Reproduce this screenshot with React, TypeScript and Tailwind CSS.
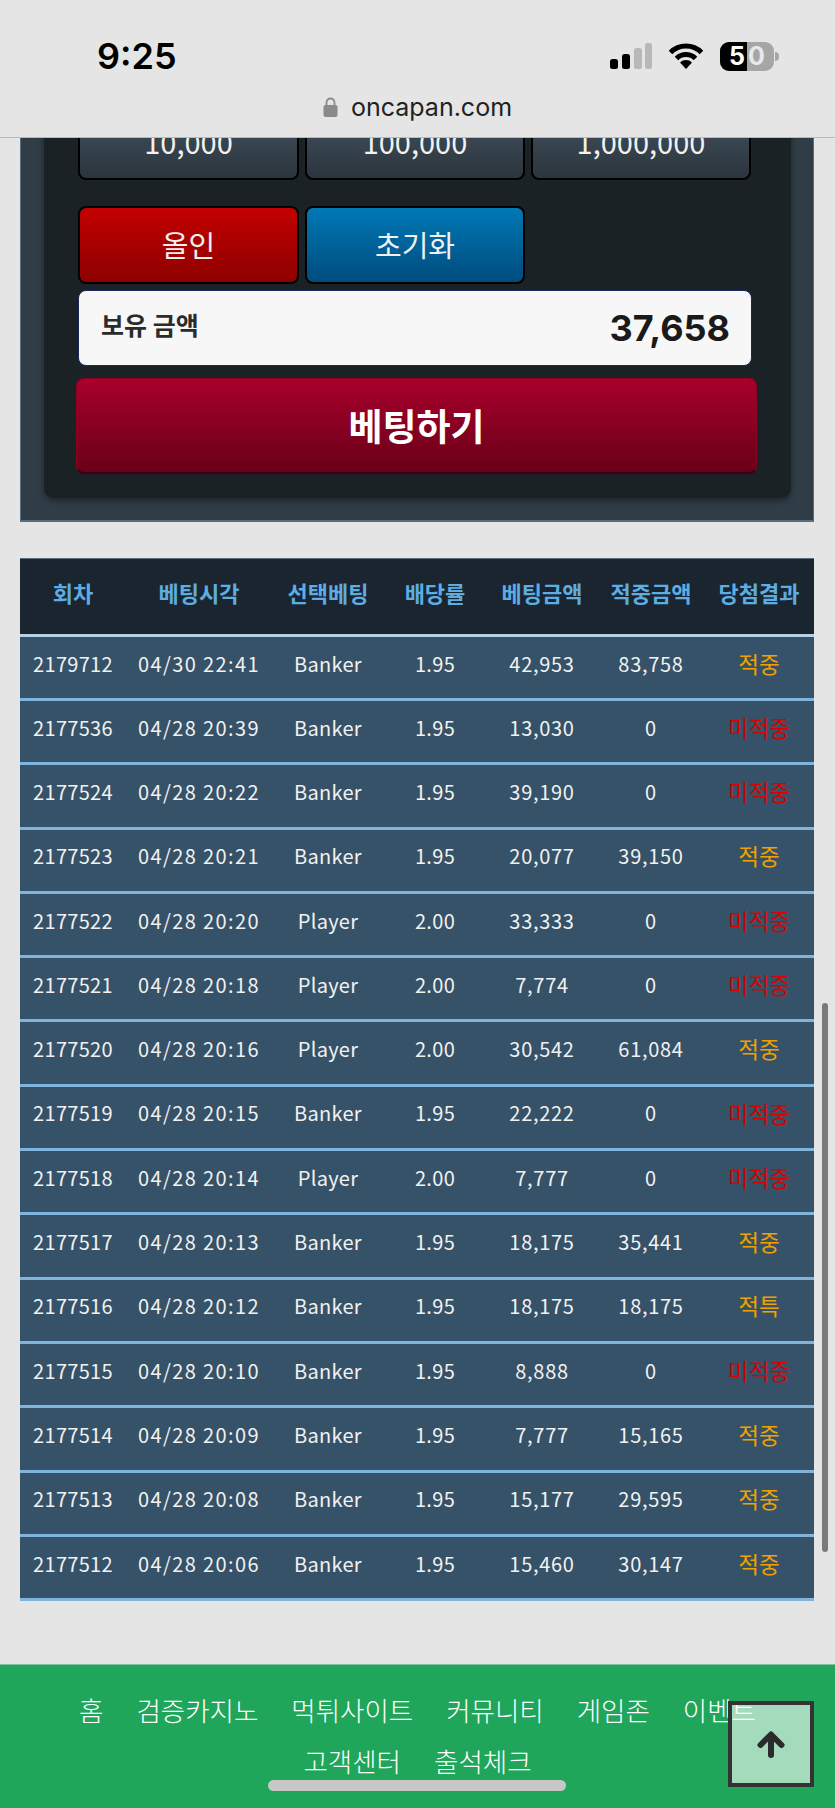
const KR = "font-['Nanum_Gothic','Noto_Sans_CJK_KR','Noto_Sans',sans-serif]";

const rows: [string, string, string, string, string, string, string][] = [
  ["2179712", "04/30 22:41", "Banker", "1.95", "42,953", "83,758", "적중"],
  ["2177536", "04/28 20:39", "Banker", "1.95", "13,030", "0", "미적중"],
  ["2177524", "04/28 20:22", "Banker", "1.95", "39,190", "0", "미적중"],
  ["2177523", "04/28 20:21", "Banker", "1.95", "20,077", "39,150", "적중"],
  ["2177522", "04/28 20:20", "Player", "2.00", "33,333", "0", "미적중"],
  ["2177521", "04/28 20:18", "Player", "2.00", "7,774", "0", "미적중"],
  ["2177520", "04/28 20:16", "Player", "2.00", "30,542", "61,084", "적중"],
  ["2177519", "04/28 20:15", "Banker", "1.95", "22,222", "0", "미적중"],
  ["2177518", "04/28 20:14", "Player", "2.00", "7,777", "0", "미적중"],
  ["2177517", "04/28 20:13", "Banker", "1.95", "18,175", "35,441", "적중"],
  ["2177516", "04/28 20:12", "Banker", "1.95", "18,175", "18,175", "적특"],
  ["2177515", "04/28 20:10", "Banker", "1.95", "8,888", "0", "미적중"],
  ["2177514", "04/28 20:09", "Banker", "1.95", "7,777", "15,165", "적중"],
  ["2177513", "04/28 20:08", "Banker", "1.95", "15,177", "29,595", "적중"],
  ["2177512", "04/28 20:06", "Banker", "1.95", "15,460", "30,147", "적중"],
];

const heads = ["회차", "베팅시각", "선택베팅", "배당률", "베팅금액", "적중금액", "당첨결과"];
const cols = "grid grid-cols-[106px_146px_112px_102px_112px_106px_110px] items-center text-center";

function StatusIcons() {
  return (
    <div className="flex items-center gap-[16px]">
      <svg width="42" height="26" viewBox="0 0 42 26">
        <rect x="0" y="16" width="8" height="10" rx="2.5" fill="#000" />
        <rect x="12" y="11" width="8" height="15" rx="2.5" fill="#000" />
        <rect x="24" y="5" width="8" height="21" rx="2.5" fill="#b8b8b8" />
        <rect x="35" y="0" width="7" height="26" rx="2.5" fill="#b8b8b8" />
      </svg>
      <svg width="36" height="26" viewBox="0 0 36 26">
        <path d="M18 26 L12 19.500 A8.500 8.500 0 0 1 24 19.500 Z" fill="#000" />
        <path d="M2.500 9.500 A22 22 0 0 1 33.500 9.500" fill="none" stroke="#000" strokeWidth="5" />
        <path d="M8.500 15.500 A13.500 13.500 0 0 1 27.500 15.500" fill="none" stroke="#000" strokeWidth="5" />
      </svg>
      <div className="flex items-center gap-[1px]">
        <div className="relative flex h-[29px] w-[54px] items-center justify-center gap-[3px] overflow-hidden rounded-[9px] bg-[#a6a6a6] font-['Inter',sans-serif] text-[25px] font-bold leading-none text-white">
          <div className="absolute inset-y-0 left-0 w-[27px] bg-black" />
          <span className="relative">5</span>
          <span className="relative text-[#e8e8e8]">0</span>
        </div>
        <div className="h-[9px] w-[4px] rounded-r-full bg-[#a6a6a6]" />
      </div>
    </div>
  );
}

function Chip({ children, className }: { children: React.ReactNode; className: string }) {
  return (
    <div className={`flex items-center justify-center rounded-[8px] border-2 border-black text-[29px] text-[#f1f1f1] ${className}`}>
      {children}
    </div>
  );
}

export default function App() {
  return (
    <div className={`relative h-[1808px] w-[835px] overflow-hidden bg-[#e5e5e5] ${KR}`}>
      {/* browser chrome */}
      <header className="relative z-10 h-[138px] border-b border-[#b9b9b9] bg-[#e5e5e5]">
        <div className="flex items-center justify-between pl-[97px] pr-[56px] pt-[36px]">
          <span className="font-['Inter',sans-serif] text-[36px] font-semibold leading-[40px] text-black">9:25</span>
          <StatusIcons />
        </div>
        <div className="mt-[16px] flex items-center justify-center gap-[13px]">
          <svg width="15" height="20" viewBox="0 0 15 20">
            <path d="M3.500 9V5.500a4 4 0 0 1 8 0V9" fill="none" stroke="#8a8a8a" strokeWidth="1.800" />
            <rect x="0.500" y="8" width="14" height="12" rx="2" fill="#8a8a8a" />
          </svg>
          <span className="font-['Inter',sans-serif] text-[25px] leading-[30px] text-[#222]">oncapan.com</span>
        </div>
      </header>

      {/* betting panel */}
      <section className="ml-[20px] mt-[-35px] w-[794px] border-x border-b-2 border-[#5b6d7b] bg-[#303d47] pb-[22px] pl-[23px] pr-[22px]">
        <div className="rounded-b-[10px] bg-[#1b2226] pb-[24px] pl-[34px] pr-[39px] shadow-[0_3px_6px_rgba(0,0,0,0.4)]">
          <div className="grid h-[77px] grid-cols-[221px_220px_220px] gap-x-[6px]">
            <Chip className="bg-gradient-to-b from-[#455460] to-[#2b353e]">10,000</Chip>
            <Chip className="bg-gradient-to-b from-[#455460] to-[#2b353e]">100,000</Chip>
            <Chip className="bg-gradient-to-b from-[#455460] to-[#2b353e]">1,000,000</Chip>
          </div>
          <div className="mt-[26px] grid h-[78px] grid-cols-[221px_220px_220px] gap-x-[6px]">
            <Chip className="bg-gradient-to-b from-[#c40000] to-[#8e0000]">올인</Chip>
            <Chip className="bg-gradient-to-b from-[#0079b5] to-[#004c7e]">초기화</Chip>
          </div>
          <div className="mt-[6px] flex h-[76px] w-[674px] justify-between rounded-[8px] border border-[#17275a] bg-[#f7f7f8] pl-[22px] pr-[21px]">
            <span className="mt-[17px] text-[25px] font-semibold leading-[32px] text-[#2b2b2b]">보유 금액</span>
            <span className="mt-[15px] font-['Inter',sans-serif] text-[36px] font-bold leading-[44px] text-[#1a1a1a]">37,658</span>
          </div>
          <button className="ml-[-2px] mt-[12px] flex h-[96px] w-[681px] items-center justify-center rounded-[8px] border border-b-2 border-[#8c0020] border-b-[#3b0010] bg-gradient-to-b from-[#a9002c] to-[#690018] text-[37px] font-bold text-white">
            베팅하기
          </button>
        </div>
      </section>

      {/* table */}
      <section className="mx-[20px] mt-[36px] w-[794px]">
        <div className={`${cols} h-[76px] border-t border-[#5b6d7b] bg-[#1a2530] text-[22px] font-bold text-[#5dade2]`}>
          {heads.map((h) => (
            <div key={h} className="mt-[-8px]">{h}</div>
          ))}
        </div>
        <div className="border-t-[3px] border-[#b5d2e5]" />
        {rows.map((r, i) => (
          <div
            key={r[0]}
            className={`${cols} ${i === 0 ? "h-[64px]" : "h-[64.3px]"} border-b-[3px] border-[#7fb5dc] bg-[#365268] text-[20px] tracking-[0.3px] text-[#f1f1f1]`}
          >
            <div className="mt-[-8px]">{r[0]}</div>
            <div className="mt-[-8px] tracking-[1.4px] [word-spacing:0px]">{r[1]}</div>
            <div className="mt-[-8px]">{r[2]}</div>
            <div className="mt-[-8px]">{r[3]}</div>
            <div className="mt-[-8px] tracking-[0.7px]">{r[4]}</div>
            <div className="mt-[-8px] tracking-[0.7px]">{r[5]}</div>
            <div className={`mt-[-8px] text-[22.5px] tracking-normal ${r[6] === "미적중" ? "text-[#d90000]" : "text-[#f0a000]"}`}>{r[6]}</div>
          </div>
        ))}
      </section>

      {/* footer */}
      <footer className="absolute inset-x-0 bottom-0 h-[144px] border-t border-[#7fbf9a] bg-[#1fa65a] pt-[19px] text-[26.5px] font-light leading-[51px] text-white">
        <div className="flex justify-center gap-x-[33px]">
          {["홈", "검증카지노", "먹튀사이트", "커뮤니티", "게임존", "이벤트"].map((t) => (
            <span key={t}>{t}</span>
          ))}
        </div>
        <div className="flex justify-center gap-x-[33px]">
          {["고객센터", "출석체크"].map((t) => (
            <span key={t}>{t}</span>
          ))}
        </div>
      </footer>

      {/* scroll indicator */}
      <div className="absolute left-[822px] top-[1003px] h-[549px] w-[6px] rounded-full bg-[#7a7a7a]" />

      {/* back to top */}
      <div className="absolute left-[728px] top-[1701px] flex h-[86px] w-[86px] items-center justify-center border-[4px] border-[#333] bg-[rgba(255,255,255,0.6)]">
        <svg width="28" height="27" viewBox="0 0 28 27">
          <path d="M14 24V5M3.500 14 14 3.500 24.500 14" fill="none" stroke="#2b2b2b" strokeWidth="6" strokeLinecap="round" strokeLinejoin="round" />
        </svg>
      </div>

      {/* home indicator */}
      <div className="absolute left-[268px] top-[1780px] h-[11px] w-[298px] rounded-full bg-[#c7c7c7]" />
    </div>
  );
}
